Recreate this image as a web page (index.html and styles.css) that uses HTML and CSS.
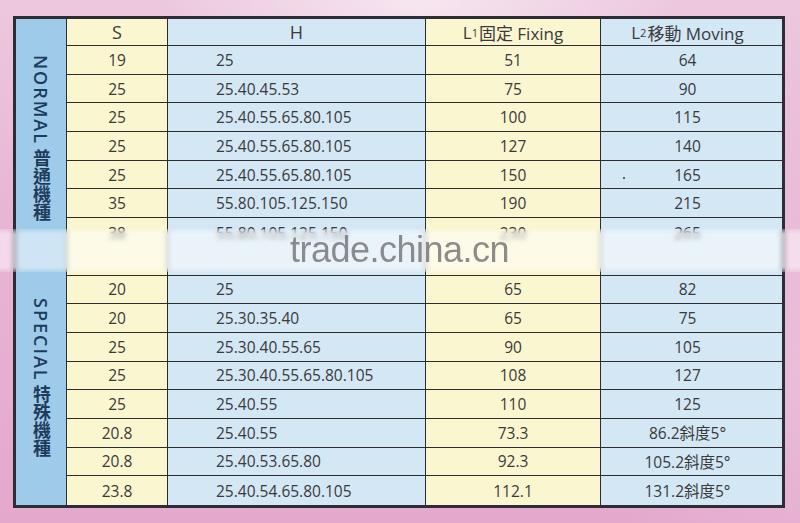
FILE: index.html
```html
<!DOCTYPE html>
<html lang="zh-Hant">
<head>
<meta charset="utf-8">
<title>Spec table</title>
<link rel="stylesheet" href="styles.css">
</head>
<body>
<div class="page">
  <div class="sheet">
    <div class="lab normal"><span class="vt"><span class="lat">NORMAL</span><span class="gap"></span>普通機種</span></div>
    <div class="lab special"><span class="vt"><span class="lat">SPECIAL</span><span class="gap"></span>特殊機種</span></div>

    <div class="c y hd big">S</div>
    <div class="c b hd big ctr">H</div>
    <div class="c y hd">L<span class="sub">1</span>固定 Fixing</div>
    <div class="c b hd last">L<span class="sub">2</span>移動 Moving</div>

    <div class="c y">19</div><div class="c b h">25</div><div class="c y">51</div><div class="c b last">64</div>
    <div class="c y">25</div><div class="c b h">25.40.45.53</div><div class="c y">75</div><div class="c b last">90</div>
    <div class="c y">25</div><div class="c b h">25.40.55.65.80.105</div><div class="c y">100</div><div class="c b last">115</div>
    <div class="c y">25</div><div class="c b h">25.40.55.65.80.105</div><div class="c y">127</div><div class="c b last">140</div>
    <div class="c y">25</div><div class="c b h">25.40.55.65.80.105</div><div class="c y">150</div><div class="c b last">165<span class="speck"></span></div>
    <div class="c y">35</div><div class="c b h">55.80.105.125.150</div><div class="c y">190</div><div class="c b last">215</div>
    <div class="c y nl">38</div><div class="c b h nl">55.80.105.125.150</div><div class="c y nl">230</div><div class="c b last nl">265</div>
    <div class="c y"></div><div class="c b h"></div><div class="c y"></div><div class="c b last"></div>

    <div class="c y">20</div><div class="c b h">25</div><div class="c y">65</div><div class="c b last">82</div>
    <div class="c y">20</div><div class="c b h">25.30.35.40</div><div class="c y">65</div><div class="c b last">75</div>
    <div class="c y">25</div><div class="c b h">25.30.40.55.65</div><div class="c y">90</div><div class="c b last">105</div>
    <div class="c y">25</div><div class="c b h">25.30.40.55.65.80.105</div><div class="c y">108</div><div class="c b last">127</div>
    <div class="c y">25</div><div class="c b h">25.40.55</div><div class="c y">110</div><div class="c b last">125</div>
    <div class="c y">20.8</div><div class="c b h">25.40.55</div><div class="c y">73.3</div><div class="c b last">86.2斜度5°</div>
    <div class="c y">20.8</div><div class="c b h">25.40.53.65.80</div><div class="c y">92.3</div><div class="c b last">105.2斜度5°</div>
    <div class="c y end">23.8</div><div class="c b h end">25.40.54.65.80.105</div><div class="c y end">112.1</div><div class="c b last end">131.2斜度5°</div>
  </div>
  <div class="watermark"><span class="wm-text">trade.china.cn</span></div>
</div>
</body>
</html>
```

FILE: styles.css
```css
html, body {
  margin: 0;
  padding: 0;
}
body {
  width: 800px;
  height: 523px;
  overflow: hidden;
  font-family: "Open Sans", "Noto Sans CJK TC", sans-serif;
  color: #3a3a3c;
  background:
    radial-gradient(ellipse 260px 120px at 420px 0px, rgba(255,255,255,0.55), rgba(255,255,255,0) 100%),
    radial-gradient(ellipse 200px 300px at 800px 380px, rgba(255,255,255,0.18), rgba(255,255,255,0) 100%),
    linear-gradient(180deg, #ecc8de 0%, #e8b6d5 40%, #e4a8cd 100%);
}
.page {
  position: relative;
  width: 800px;
  height: 523px;
  padding: 16px 0 0 13px;
  box-sizing: border-box;
}
.sheet {
  display: grid;
  grid-template-columns: 51px 101px 258px 175px 181px;
  grid-template-rows: 27px repeat(16, 1fr);
  width: 766px;
  height: 486px;
  border: 3px solid #2e2c37;
  background: #d4e7f5;
}
.lab {
  grid-column: 1;
  background: #9ecbea;
  border-right: 1.5px solid #2c2c30;
  display: flex;
  justify-content: center;
  align-items: flex-start;
  color: #1f3c5c;
  font-size: 18px;
  font-weight: 600;
}
.lab.normal {
  grid-row: 1 / span 9;
  padding-top: 36px;
}
.lab.special {
  grid-row: 10 / span 8;
  padding-top: 22px;
}
.vt {
  writing-mode: vertical-rl;
  text-orientation: mixed;
  letter-spacing: 0;
  line-height: 1;
}
.lat {
  letter-spacing: 2px;
}
.gap {
  display: inline-block;
  height: 4px;
}
.c {
  display: flex;
  align-items: center;
  justify-content: center;
  font-size: 15.5px;
  border-bottom: 1.5px solid #2c2c30;
  border-right: 1.5px solid #2c2c30;
  white-space: nowrap;
  min-width: 0;
  position: relative;
}
.c.last {
  border-right: none;
  padding-right: 8px;
}
.c.end {
  border-bottom: none;
}
.c.nl {
  border-bottom: none;
  align-items: flex-start;
  padding-top: 4px;
}
.y {
  background: #faf6d0;
}
.b {
  background: #d4e7f5;
}
.h {
  justify-content: flex-start;
  padding-left: 48px;
}
.hd {
  font-size: 17px;
  color: #3a3a3e;
}
.hd.big {
  font-size: 18px;
}
.hd.ctr {
  justify-content: center;
}
.sub {
  font-size: 11px;
  margin-right: 1px;
}
.speck {
  position: absolute;
  left: 22px;
  top: 16px;
  width: 2px;
  height: 2px;
  border-radius: 50%;
  background: #333;
}
.watermark {
  position: absolute;
  left: 0;
  top: 229px;
  width: 800px;
  height: 43px;
  background: rgba(255, 255, 255, 0.5);
  -webkit-backdrop-filter: blur(2.5px);
  backdrop-filter: blur(2.5px);
  -webkit-mask-image: linear-gradient(180deg, rgba(0,0,0,0.4) 0%, #000 12%, #000 88%, rgba(0,0,0,0.4) 100%);
  mask-image: linear-gradient(180deg, rgba(0,0,0,0.4) 0%, #000 12%, #000 88%, rgba(0,0,0,0.4) 100%);
  display: flex;
  align-items: flex-start;
  box-sizing: border-box;
  padding-left: 290px;
}
.wm-text {
  font-family: "Liberation Sans", Arial, sans-serif;
  font-size: 36px;
  line-height: 36px;
  margin-top: 3px;
  color: rgba(120, 120, 122, 0.85);
  letter-spacing: -0.5px;
}
```
